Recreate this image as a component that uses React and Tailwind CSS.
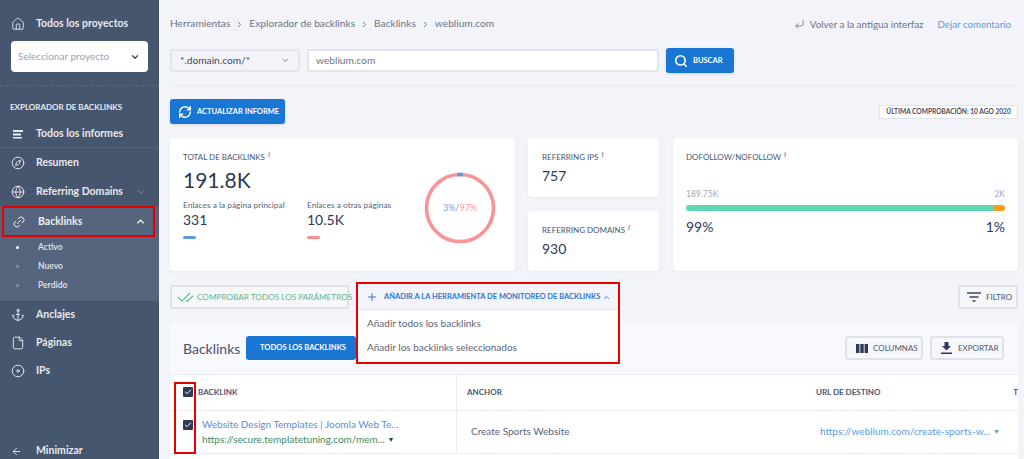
import React from "react";
import {
  House, ChevronDown, ChevronUp, ChevronRight, Compass, Globe, Link2, Anchor, File, Disc, ArrowLeft,
  Search, RefreshCw, CornerDownLeft, CheckCheck, Plus, Check,
} from "lucide-react";

function NavItem({ icon: Icon, label, chevron }) {
  return (
    <div className="flex items-center h-[28px] pl-[11px] pr-[13px] text-[10.5px] font-bold text-[#e6e9ee]">
      <Icon size={14} strokeWidth={1.6} className="text-[#e6e9ee] mr-[11px] w-[14px] shrink-0" />
      <span>{label}</span>
      {chevron && <ChevronDown size={10} className="ml-auto text-[#8d99ab]" />}
    </div>
  );
}

function Lines() {
  return (
    <svg width="14" height="14" viewBox="0 0 14 14" className="mr-[11px] shrink-0">
      <path d="M2 3h10v2H2zM2 6.5h8v2H2zM2 10h9v1.6H2z" fill="#e6e9ee" />
    </svg>
  );
}

function Sidebar() {
  return (
    <aside className="w-[159px] h-[459px] shrink-0 bg-[#46566f] flex flex-col relative">
      <div className="flex items-center pl-[11px] pt-[13px] h-[34px] text-[10.5px] font-bold text-[#e6e9ee]">
        <House size={14} strokeWidth={1.5} className="mr-[11px]" />
        Todos los proyectos
      </div>
      <div className="mx-[11px] mt-[7px] h-[31px] bg-white rounded-[4px] flex items-center justify-between pl-[7px] pr-[8px] text-[10px] text-[#9aa3b2]">
        Seleccionar proyecto
        <ChevronDown size={10} strokeWidth={3} className="text-[#3a4660]" />
      </div>
      <div className="mt-[13px] border-t border-dashed border-[#5c6a82]" />
      <div className="mt-[15px] pl-[10px] text-[8px] font-bold text-[#e6e9ee] leading-[12px]">EXPLORADOR DE BACKLINKS</div>
      <div className="mt-[7px] flex items-center h-[28px] pl-[11px] text-[10.5px] font-bold text-[#e6e9ee] border-b border-[#56657d]">
        <Lines />
        Todos los informes
      </div>
      <div className="mt-[1px]">
        <NavItem icon={Compass} label="Resumen" />
      </div>
      <div className="mt-[1px]">
        <NavItem icon={Globe} label="Referring Domains" chevron />
      </div>
      <div className="h-[95px] bg-[#56657d] relative">
        <div className="flex items-center h-[31px] pl-[12px] pr-[13px] text-[10.5px] font-bold text-[#eef0f4]">
          <Link2 size={14} strokeWidth={1.6} className="mr-[12px] -rotate-45" />
          Backlinks
          <ChevronUp size={11} strokeWidth={3} className="ml-auto text-white" />
        </div>
        <div className="absolute left-[2px] top-0 w-[153px] h-[31px] border-[2px] border-[#e50000]" />
        <div className="pt-[1px] text-[8.5px] font-bold text-[#d9dde4]">
          {["Activo", "Nuevo", "Perdido"].map((t, i) => (
            <div key={t} className="flex items-center h-[19px] pl-[16px]">
              <span className={`w-[3px] h-[3px] rounded-full mr-[19px] ${i === 0 ? "bg-white" : "border border-[#aab2c0] bg-transparent"}`} />
              {t}
            </div>
          ))}
        </div>
      </div>
      <NavItem icon={Anchor} label="Anclajes" />
      <NavItem icon={File} label="Páginas" />
      <NavItem icon={Disc} label="IPs" />
      <div className="mt-auto mb-[-6px] h-[28px] flex items-center pl-[11px] text-[10.5px] font-bold text-[#e6e9ee]">
        <ArrowLeft size={11} strokeWidth={2} className="mr-[14px]" />
        Minimizar
      </div>
    </aside>
  );
}

function Info() {
  return <span className="italic font-serif text-[8px] text-[#66718a] ml-[3px] relative -top-[3px]">i</span>;
}

function Label({ children }) {
  return <div className="text-[8px] leading-[12px] text-[#4c5670]">{children}<Info /></div>;
}

function Card({ className, children }) {
  return <div className={`bg-white rounded-[4px] shadow-[0_1px_3px_rgba(60,70,110,0.06)] ${className}`}>{children}</div>;
}

function OutlineBtn({ className, children }) {
  return (
    <div className={`h-[24px] flex items-center rounded-[3px] border-2 border-[#dfe2ea] bg-[#f6f7fa] text-[#4c5670] ${className}`}>
      {children}
    </div>
  );
}

function Stats() {
  return (
    <div className="flex mt-[14px] h-[133px]">
      <Card className="w-[345px] pl-[13px] pt-[13px] relative">
        <Label>TOTAL DE BACKLINKS</Label>
        <div className="mt-[2px] text-[21px] leading-[28px] text-[#2e3a58]">191.8K</div>
        <div className="flex mt-[5px]">
          <div className="w-[124px]">
            <div className="text-[8.4px] leading-[12px] text-[#5a6378]">Enlaces a la página principal</div>
            <div className="mt-0 text-[14px] leading-[18px] text-[#2e3a58]">331</div>
            <div className="mt-[7px] w-[13px] h-[3px] rounded-full bg-[#5b9be0]" />
          </div>
          <div>
            <div className="text-[8.4px] leading-[12px] text-[#5a6378]">Enlaces a otras páginas</div>
            <div className="mt-0 text-[14px] leading-[18px] text-[#2e3a58]">10.5K</div>
            <div className="mt-[7px] w-[13px] h-[3px] rounded-full bg-[#f98d8f]" />
          </div>
        </div>
        <svg width="72" height="72" viewBox="0 0 72 72" className="absolute left-[254px] top-[34px]">
          <circle cx="36" cy="36" r="33.5" fill="none" stroke="#f99496" strokeWidth="3.6" />
          <path d="M33.5 2.6 A33.5 33.5 0 0 1 39 2.6" fill="none" stroke="#5b9be0" strokeWidth="3.6" />
        </svg>
        <div className="absolute left-[254px] top-[34px] w-[72px] h-[72px] flex items-center justify-center text-[9px]">
          <span className="text-[#6ba6e3]">3%</span><span className="text-[#8a93a5]">/</span><span className="text-[#f99496]">97%</span>
        </div>
      </Card>
      <div className="w-[131px] ml-[13px] flex flex-col justify-between">
        <Card className="h-[59px] pl-[14px] pt-[13px]">
          <Label>REFERRING IPS</Label>
          <div className="mt-[2px] text-[14px] leading-[20px] text-[#2e3a58]">757</div>
        </Card>
        <Card className="h-[60px] pl-[14px] pt-[13px]">
          <Label>REFERRING DOMAINS</Label>
          <div className="mt-[2px] text-[14px] leading-[20px] text-[#2e3a58]">930</div>
        </Card>
      </div>
      <Card className="w-[345px] ml-[14px] px-[13px] pt-[13px]">
        <Label>DOFOLLOW/NOFOLLOW</Label>
        <div className="mt-[24px] flex justify-between text-[8.5px] leading-[12px] text-[#a3a9b6]">
          <span>189.75K</span><span>2K</span>
        </div>
        <div className="mt-[5px] flex h-[6px] rounded-full overflow-hidden">
          <div className="flex-1 bg-[#5cd8b4]" />
          <div className="w-[11px] bg-[#fb9b1f]" />
        </div>
        <div className="mt-[6px] flex justify-between text-[14px] leading-[20px] text-[#2e3a58]">
          <span>99%</span><span>1%</span>
        </div>
      </Card>
    </div>
  );
}

function Toolbar() {
  return (
    <div className="flex items-center mt-[14px] h-[24px]">
      <div className="w-[179px] h-[24px] flex items-center rounded-[3px] border-2 border-[#dfe2ea] bg-[#f6f7fa] pl-[5px] text-[8.2px] text-[#5fb58c]">
        <CheckCheck size={17} strokeWidth={1.5} className="w-[17px] shrink-0 mr-[3px] text-[#5fb58c]" />
        <span>COMPROBAR TODOS LOS PARÁMETROS</span>
      </div>
      <div className="relative ml-[7px] w-[263px] h-[24px] flex items-center pl-[10px] bg-[#f3f4f9] text-[7.5px] font-bold text-[#2f78c9] z-10">
        <Plus size={12} strokeWidth={2} className="mr-[6px]" />
        AÑADIR A LA HERRAMIENTA DE MONITOREO DE BACKLINKS
        <ChevronUp size={9} strokeWidth={2.5} className="ml-[2px]" />
        <div className="absolute left-0 top-[24px] w-full h-[55px] bg-white border-t border-[#dfe2ea] pl-[11px] text-[10px] font-normal text-[#5a6378]">
          <div className="h-[24px] pt-[3px] flex items-center">Añadir todos los backlinks</div>
          <div className="h-[26px] pt-[1px] flex items-center">Añadir los backlinks seleccionados</div>
        </div>
        <div className="absolute left-0 -top-[3px] w-[264px] h-[82px] border-[2px] border-[#e50000] pointer-events-none" />
      </div>
      <OutlineBtn className="ml-auto w-[60px] pl-[7px] text-[8px]">
        <svg width="14" height="10" viewBox="0 0 14 10" className="mr-[5px]">
          <path d="M0 1h14M2.5 5h9M5.5 9h3" stroke="#3a4660" strokeWidth="1.3" />
        </svg>
        FILTRO
      </OutlineBtn>
    </div>
  );
}

function Table() {
  return (
    <div className="mt-[13px] w-[848px] h-[137px] bg-[#f8f9fc] rounded-t-[4px] flex flex-col">
      <div className="h-[53px] shrink-0 flex items-center pl-[13px] pr-[14px] border-b border-[#eceef4]">
        <span className="text-[14px] text-[#46516d] w-[63px]">Backlinks</span>
        <div className="w-[110px] h-[24px] flex items-center pl-[14px] rounded-[3px] bg-[#1976d2] text-[7.6px] font-bold text-white">TODOS LOS BACKLINKS</div>
        <OutlineBtn className="ml-auto w-[78px] pl-[9px] text-[8px]">
          <svg width="12" height="9" viewBox="0 0 12 9" className="mr-[5px]">
            <path d="M0 0h3.4v9H0zM4.3 0h3.4v9H4.3zM8.6 0H12v9H8.6z" fill="#2e3a58" />
          </svg>
          COLUMNAS
        </OutlineBtn>
        <OutlineBtn className="ml-[7px] w-[74px] pl-[9px] text-[8px]">
          <svg width="11" height="12" viewBox="0 0 11 12" className="mr-[6px]">
            <path d="M3.5 0h4v4H10L5.5 8.6 1 4h2.5zM0 10.4h11V12H0z" fill="#2e3a58" />
          </svg>
          EXPORTAR
        </OutlineBtn>
      </div>
      <div className="bg-white flex-1 relative">
        <div className="h-[36px] flex items-center border-b border-[#eceef4] text-[8px] font-bold text-[#4c5670]">
          <div className="w-[287px] h-full flex items-center pl-[13px] pb-[2px] border-r border-[#eceef4]">
            <span className="w-[10px] h-[10px] mr-[5px] rounded-[1px] bg-[#2e3a58] flex items-center justify-center">
              <Check size={8} strokeWidth={3} className="text-white" />
            </span>
            BACKLINK
          </div>
          <div className="w-[348px] pl-[10px] pb-[2px]">ANCHOR</div>
          <div className="flex-1 pl-[11px] pb-[2px] relative">URL DE DESTINO<span className="absolute right-0">T</span></div>
        </div>
        <div className="h-[43px] flex items-center border-b border-[#eceef4]">
          <div className="w-[287px] h-full flex pl-[13px] pt-[6px] border-r border-[#eceef4]">
            <span className="w-[10px] h-[10px] mt-[3px] mr-[9px] rounded-[1px] bg-[#2e3a58] flex items-center justify-center">
              <Check size={8} strokeWidth={3} className="text-white" />
            </span>
            <div className="text-[10px] leading-[15px]">
              <div className="text-[#5b8fd0]">Website Design Templates | Joomla Web Te...</div>
              <div className="text-[#3d8a62]">https://secure.templatetuning.com/mem... <span className="text-[#2e3a58] text-[7px] relative -top-[1px]">▼</span></div>
            </div>
          </div>
          <div className="w-[348px] pl-[14px] pb-[2px] text-[10px] text-[#5a6378]">Create Sports Website</div>
          <div className="flex-1 pl-[15px] pb-[2px] text-[10px] text-[#5b9be0]">https://weblium.com/create-sports-w... <span className="text-[7px] relative -top-[1px]">▼</span></div>
        </div>
        <div className="absolute left-[4px] top-[7px] w-[22px] h-[72px] border-[2px] border-[#e50000]" />
      </div>
    </div>
  );
}

export default function App() {
  return (
    <div className="w-[1024px] h-[459px] overflow-hidden flex bg-[#f3f4f9] whitespace-nowrap font-['Lato',sans-serif]">
      <Sidebar />
      <main className="flex-1 pl-[11px] pr-[6px]">
        <div className="flex items-center h-[16px] mt-[16px] text-[10.2px] text-[#6b7486]">
          <span>Herramientas</span>
          <ChevronRight size={9} strokeWidth={2.5} className="mx-[5px]" />
          <span>Explorador de backlinks</span>
          <ChevronRight size={9} strokeWidth={2.5} className="mx-[5px]" />
          <span>Backlinks</span>
          <ChevronRight size={9} strokeWidth={2.5} className="mx-[5px]" />
          <span>weblium.com</span>
          <CornerDownLeft size={11} strokeWidth={1.8} className="ml-auto mr-[5px]" />
          <span className="text-[9.8px]">Volver a la antigua interfaz</span>
          <span className="ml-[14px] mr-[7px] text-[9.7px] text-[#5b9be0]">Dejar comentario</span>
        </div>
        <div className="flex items-center mt-[16px] h-[25px]">
          <div className="w-[130px] h-[23px] flex items-center justify-between pl-[8px] pr-[8px] rounded-[3px] border-2 border-[#e3e5ec] text-[10.2px] text-[#3f4a63]">
            *.domain.com/*
            <ChevronDown size={9} className="text-[#5a6378]" />
          </div>
          <div className="ml-[7px] w-[352px] h-[23px] flex items-center pl-[7px] rounded-[3px] border-2 border-[#e3e5ec] bg-white text-[10.2px] text-[#6b7486]">weblium.com</div>
          <div className="ml-[7px] w-[68px] h-[25px] flex items-center pl-[8px] rounded-[3px] bg-[#1976d2] text-[7.5px] font-bold text-white shadow-sm">
            <Search size={14} strokeWidth={2.6} className="mr-[5px]" />
            BUSCAR
          </div>
        </div>
        <div className="mt-[12px] border-t border-[#e9ebf1]" />
        <div className="flex items-center justify-between mt-[13px] h-[25px]">
          <div className="w-[115px] h-[25px] flex items-center pl-[8px] rounded-[3px] bg-[#1976d2] text-[7.5px] font-bold text-white shadow-sm">
            <RefreshCw size={14} strokeWidth={2.5} className="mr-[5px]" />
            ACTUALIZAR INFORME
          </div>
          <div className="w-[139px] h-[14px] flex items-center justify-center rounded-[2px] border border-[#dfe2ea] bg-white text-[6.6px] font-bold text-[#3f4a63]">ÚLTIMA COMPROBACIÓN: 10 AGO 2020</div>
        </div>
        <Stats />
        <Toolbar />
        <Table />
      </main>
    </div>
  );
}
